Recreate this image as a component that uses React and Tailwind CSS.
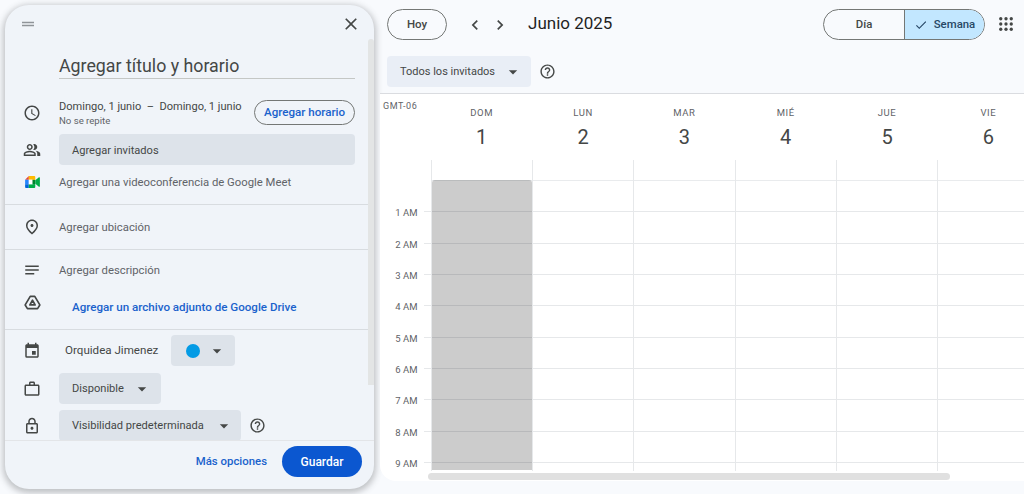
import {
  MdArrowDropDown,
  MdCheck,
  MdChevronLeft,
  MdChevronRight,
  MdClose,
  MdDragHandle,
  MdEvent,
  MdOutlineHelpOutline,
  MdOutlineLock,
  MdOutlineNotes,
  MdOutlinePeopleAlt,
  MdOutlinePlace,
  MdOutlineSchedule,
  MdOutlineWorkOutline
} from "react-icons/md";

const days = [
  ["DOM", "1"],
  ["LUN", "2"],
  ["MAR", "3"],
  ["MIÉ", "4"],
  ["JUE", "5"],
  ["VIE", "6"]
];
const hours = ["1 AM", "2 AM", "3 AM", "4 AM", "5 AM", "6 AM", "7 AM", "8 AM", "9 AM"];

function MeetIcon() {
  return (
    <svg width="15" height="12" viewBox="0 0 16 13">
      <path d="M0 4 L4 0 V4 Z" fill="#ea4335" />
      <path d="M0 4 H4 V9 H0 Z" fill="#2684fc" />
      <path d="M0 9 H4 V13 H1.2 C.5 13 0 12.5 0 11.8 Z" fill="#0066da" />
      <path d="M4 0 H10 C10.6 0 11 .4 11 1 V4.2 L8 4 H4 Z" fill="#ffba00" />
      <path d="M4 9 H8 L11 8.8 V12 C11 12.6 10.6 13 10 13 H4 Z" fill="#00ac47" />
      <path d="M4 4 H8 V9 H4 Z" fill="#ffffff" />
      <path d="M8 4 L11 4.2 V8.8 L8 9 Z" fill="#00832d" />
      <path d="M11 4.6 L15 1.4 C15.4 1.1 16 1.4 16 1.9 V11.1 C16 11.6 15.4 11.9 15 11.6 L11 8.4 Z" fill="#00ac47" />
    </svg>
  );
}

function DriveIcon() {
  return (
    <svg width="17" height="15" viewBox="0 0 18 16" fill="none" stroke="#444746" strokeWidth="1.8" strokeLinejoin="round">
      <path d="M6.6 1.5 H11.4 L16.8 10.6 L14.4 14.5 H3.6 L1.2 10.6 Z" />
      <path d="M9 5.6 L11.8 10.6 H6.2 Z" />
    </svg>
  );
}

function AppsDots() {
  const dots = [4, 10, 16];
  return (
    <svg width="14" height="14" viewBox="2 2 16 16" fill="#444746">
      {dots.map((y) => dots.map((x) => <circle key={`${x}-${y}`} cx={x} cy={y} r="1.9" />))}
    </svg>
  );
}

function IconCell({ children, className = "" }) {
  return <div className={`flex w-[54px] shrink-0 items-center justify-center text-[#444746] ${className}`}>{children}</div>;
}

function Dropdown({ children, className = "" }) {
  return (
    <div className={`flex h-[31px] items-center whitespace-nowrap rounded-[4px] bg-[#dde3ea] pl-[13px] text-[11.1px] text-[#444746] ${className}`}>
      {children}
    </div>
  );
}

function Divider() {
  return <div className="mt-[10px] border-b border-[#d8dce0]" />;
}

function EventPanel() {
  return (
    <aside className="flex h-[484px] w-[369px] shrink-0 flex-col overflow-hidden rounded-[24px] bg-[#f0f4f9] shadow-[0_2px_6px_2px_rgba(60,64,67,0.3)]">
      <header className="flex h-[34px] shrink-0 items-center justify-between pl-[14px] pr-[13px] pt-[4px]">
        <MdDragHandle size={18} className="text-[#8f9499]" />
        <MdClose size={20} className="text-[#444746]" />
      </header>

      <div className="relative flex-1 overflow-hidden">
        <div className="absolute right-0 top-0 h-[346px] w-[6px] rounded-t bg-[#e3e5e5]" />
        <div className="w-[363px]">
          <div className="ml-[54px] mr-[13px] flex h-[40px] items-center border-b border-[#c4c7c5] pt-[16px] text-[17.8px] text-[#444746]">
            Agregar título y horario
          </div>

          <div className="mt-[21px] flex h-[25px] items-center pr-[13px]">
            <IconCell>
              <MdOutlineSchedule size={18} />
            </IconCell>
            <div className="flex-1">
              <p className="whitespace-nowrap text-[11.05px] leading-[15px] text-[#444746]">Domingo, 1 junio&nbsp; – &nbsp;Domingo, 1 junio</p>
              <p className="text-[9.6px] leading-[13px] text-[#5f6368]">No se repite</p>
            </div>
            <button
              type="button"
              className="h-[25px] w-[101px] rounded-full border border-[#747775] text-[11.6px] font-medium text-[#1a62cc]"
            >
              Agregar horario
            </button>
          </div>

          <div className="mt-[9px] flex items-center pr-[13px]">
            <IconCell>
              <MdOutlinePeopleAlt size={18} />
            </IconCell>
            <Dropdown className="flex-1 pt-[3px] text-[#5f6368]">Agregar invitados</Dropdown>
          </div>

          <div className="mt-[5px] flex h-[24px] items-center text-[11.3px] text-[#5f6368]">
            <IconCell>
              <MeetIcon />
            </IconCell>
            <span className="pt-[3px]">Agregar una videoconferencia de Google Meet</span>
          </div>
          <Divider />

          <div className="mt-[10px] flex h-[24px] items-center text-[11.3px] text-[#5f6368]">
            <IconCell>
              <MdOutlinePlace size={18} />
            </IconCell>
            <span className="pt-[2px]">Agregar ubicación</span>
          </div>
          <Divider />

          <div className="mt-[8px] flex h-[24px] items-center text-[11.3px] text-[#5f6368]">
            <IconCell>
              <MdOutlineNotes size={18} />
            </IconCell>
            <span className="pt-[2px]">Agregar descripción</span>
          </div>

          <div className="mt-[13px] flex h-[24px] items-center">
            <IconCell className="mb-[10px]">
              <DriveIcon />
            </IconCell>
            <span className="ml-[13px] pt-[2px] text-[11.6px] font-medium text-[#1a62cc]">Agregar un archivo adjunto de Google Drive</span>
          </div>
          <Divider />

          <div className="mt-[5px] flex items-center">
            <IconCell>
              <MdEvent size={18} />
            </IconCell>
            <span className="ml-[6px] w-[106px] text-[11.6px] text-[#444746]">Orquidea Jimenez</span>
            <Dropdown className="w-[64px] pl-[15px]">
              <span className="h-[14px] w-[14px] rounded-full bg-[#039be5]" />
              <MdArrowDropDown size={20} className="ml-[7px]" />
            </Dropdown>
          </div>

          <div className="mt-[7px] flex items-center">
            <IconCell>
              <MdOutlineWorkOutline size={18} />
            </IconCell>
            <Dropdown className="w-[102px]">
              <span className="pt-[2px]">Disponible</span>
              <MdArrowDropDown size={20} className="ml-[8px]" />
            </Dropdown>
          </div>

          <div className="mt-[6px] flex items-center">
            <IconCell>
              <MdOutlineLock size={18} />
            </IconCell>
            <Dropdown className="w-[182px]">
              <span className="pt-[1px]">Visibilidad predeterminada</span>
              <MdArrowDropDown size={20} className="ml-[10px]" />
            </Dropdown>
            <MdOutlineHelpOutline size={17} className="ml-[8px] text-[#444746]" />
          </div>
        </div>
      </div>

      <footer className="flex h-[49px] shrink-0 items-start justify-end border-t border-[#e3e5e8] pr-[12px] pt-[5px]">
        <div className="flex items-center">
          <span className="text-[11.4px] font-medium text-[#1a62cc]">Más opciones</span>
          <button type="button" className="ml-[15px] h-[31px] w-[80px] rounded-full bg-[#0b57d0] text-[12px] font-medium text-white">
            Guardar
          </button>
        </div>
      </footer>
    </aside>
  );
}

function CalendarHeader() {
  return (
    <div className="h-[94px] shrink-0 border-b border-[#dadce0] pl-[7px] pr-[10px]">
      <div className="mt-[9px] flex h-[31px] items-center">
        <button type="button" className="h-[31px] w-[60px] rounded-full border border-[#747775] text-[11.5px] font-medium text-[#444746]">
          Hoy
        </button>
        <MdChevronLeft size={20} className="ml-[18px] text-[#444746]" />
        <MdChevronRight size={20} className="ml-[5px] text-[#444746]" />
        <span className="ml-[18px] pb-[1px] text-[17px] text-[#1f1f1f]">Junio 2025</span>
        <div className="ml-auto flex h-[31px] w-[162px] overflow-hidden rounded-full border border-[#747775] text-[11.4px] font-medium text-[#444746]">
          <div className="flex w-[81px] items-center justify-center border-r border-[#747775]">Día</div>
          <div className="flex flex-1 items-center justify-center gap-[6px] bg-[#c2e7ff] text-[#274766]">
            <MdCheck size={14} />
            Semana
          </div>
        </div>
        <div className="ml-[14px] mr-[1px] flex items-center pb-[1px]">
          <AppsDots />
        </div>
      </div>
      <div className="mt-[16px] flex items-center">
        <div className="flex h-[31px] w-[144px] items-center whitespace-nowrap rounded-[4px] bg-[#e9eef6] pl-[13px] text-[11px] text-[#444746]">
          <span className="pt-[2px]">Todos los invitados</span>
          <MdArrowDropDown size={20} className="ml-[8px]" />
        </div>
        <MdOutlineHelpOutline size={17} className="ml-[8px] text-[#444746]" />
      </div>
    </div>
  );
}

function WeekGrid() {
  return (
    <div className="relative flex-1 overflow-hidden rounded-bl-[16px] bg-white">
      <div className="flex h-[66px]">
        <div className="w-[51px] shrink-0 pl-[3px] pt-[7px] text-[9px] leading-[10px] tracking-[0.6px] text-[#5f6368]">GMT-06</div>
        {days.map(([name, num]) => (
          <div key={name} className="w-[101.35px] shrink-0 pt-[13px] text-center">
            <p className="text-[9.5px] leading-[12px] tracking-[0.6px] text-[#5f6368]">{name}</p>
            <p className="mt-[5px] text-[20px] leading-[26px] text-[#444746]">{num}</p>
          </div>
        ))}
      </div>

      <div className="flex h-[311px]">
        <div className="w-[50.5px] shrink-0 pt-[20px]">
          <div className="h-[31.33px]" />
          {hours.map((h) => (
            <div key={h} className="flex h-[31.33px] items-start justify-end">
              <span className="mr-[6px] -translate-y-[4px] whitespace-nowrap text-[9.5px] leading-[12px] text-[#5f6368]">{h}</span>
              <span className="w-[7px] border-t border-[#e6e8ea]" />
            </div>
          ))}
        </div>
        {days.map(([name], i) => (
          <div key={name} className="relative w-[101.35px] shrink-0 border-l border-[#e6e8ea] pt-[20px]">
            <div className="h-[31.33px] border-t border-[#e9ebed]" />
            {hours.map((h) => (
              <div key={h} className="h-[31.33px] border-t border-[#e6e8ea]" />
            ))}
            {i === 0 ? <div className="absolute left-0 right-0 top-[20px] h-[290px] rounded-t-[3px] bg-black/20" /> : null}
          </div>
        ))}
      </div>

      <div className="ml-[48px] mt-[2px] h-[7px] w-[522px] rounded-full bg-[#e0e0e0]" />
    </div>
  );
}

export default function App() {
  return (
    <div
      className="flex h-[494px] w-[1024px] overflow-hidden bg-[#f8fafd] pl-[5px] pt-[5px]"
      style={{ fontFamily: "Roboto, 'Liberation Sans', sans-serif" }}
    >
      <EventPanel />
      <main className="-mt-[5px] ml-[6px] flex h-[481px] min-w-0 flex-1 flex-col">
        <CalendarHeader />
        <WeekGrid />
      </main>
    </div>
  );
}
